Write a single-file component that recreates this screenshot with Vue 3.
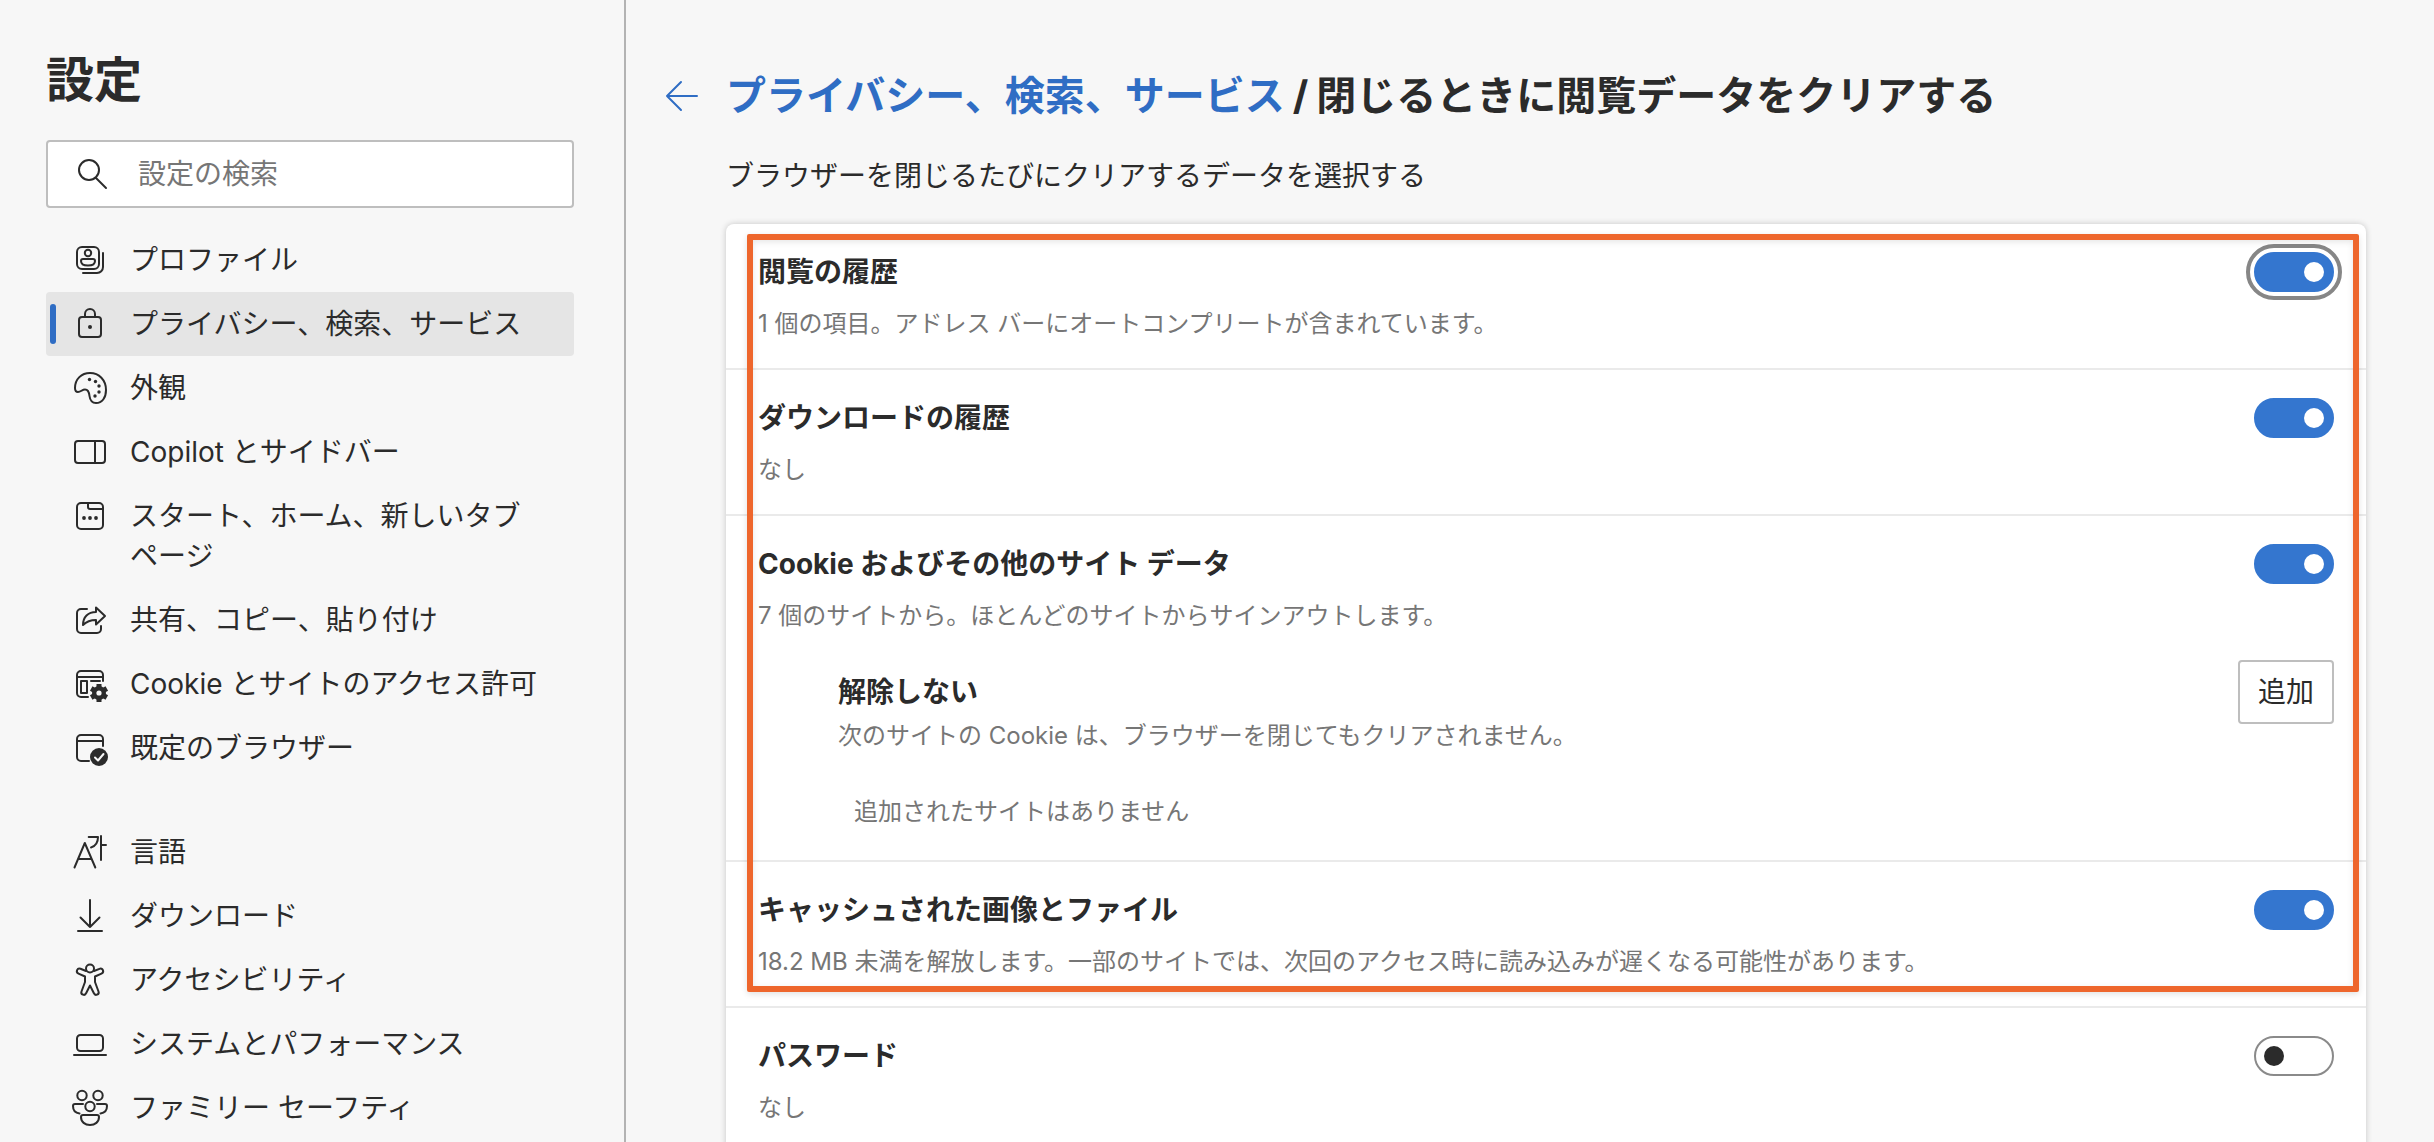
<script setup>
import { ref } from 'vue'

const mainNav = [
  { icon: 'profile', label: 'プロファイル' },
  { icon: 'lock', label: 'プライバシー、検索、サービス', current: true },
  { icon: 'palette', label: '外観' },
  { icon: 'sidebar', label: 'Copilot とサイドバー' },
  { icon: 'tab', label: 'スタート、ホーム、新しいタブ ページ' },
  { icon: 'share', label: '共有、コピー、貼り付け' },
  { icon: 'permissions', label: 'Cookie とサイトのアクセス許可' },
  { icon: 'browser', label: '既定のブラウザー' },
]

const systemNav = [
  { icon: 'language', label: '言語' },
  { icon: 'download', label: 'ダウンロード' },
  { icon: 'accessibility', label: 'アクセシビリティ' },
  { icon: 'laptop', label: 'システムとパフォーマンス' },
  { icon: 'family', label: 'ファミリー セーフティ' },
]

const navGroups = [mainNav, systemNav]

const icons = {
  profile:
    '<rect x="7" y="7" width="22" height="22" rx="5"/><path d="M33 13v14a6 6 0 0 1-6 6H13"/><circle cx="18" cy="13" r="3.2"/><path d="M13 19h10a2 2 0 0 1 2 2c0 3-3 4.5-7 4.5s-7-1.5-7-4.5a2 2 0 0 1 2-2z"/>',
  lock: '<rect x="9" y="13" width="22" height="20" rx="3"/><path d="M15 13v-3a5 5 0 0 1 10 0v3"/><circle class="solid" cx="20" cy="23" r="2"/>',
  palette:
    '<path d="M5 20C5 11 11.5 5 20 5c9 0 16 7 16 17 0 8-4 13-10 13-4 0-6-3-6.5-7-.4-4-1.500-6.500-4.500-6.500s-4 2.500-7 2.500c-2 0-3-1.500-3-4z"/><g class="solid"><circle cx="19.5" cy="11.5" r="1.7"/><circle cx="25.5" cy="13.5" r="1.7"/><circle cx="29" cy="18" r="1.7"/><circle cx="29" cy="24" r="1.7"/><circle cx="25" cy="28" r="1.7"/></g>',
  sidebar: '<rect x="5" y="9" width="30" height="22" rx="3"/><path d="M25 9v22"/>',
  tab: '<rect x="7" y="7" width="26" height="26" rx="4"/><path d="M18 7v4a2 2 0 0 0 2 2h13"/><g class="solid"><circle cx="14" cy="22" r="1.9"/><circle cx="20" cy="22" r="1.9"/><circle cx="26" cy="22" r="1.9"/></g>',
  share:
    '<path d="M17 9h-6a4 4 0 0 0-4 4v16a4 4 0 0 0 4 4h16a4 4 0 0 0 4-4v-3"/><path d="M26 7.5l9 8.5-9 8.5V20c-6 0-10 2-13 5 0-8 5-13 13-13z"/>',
  permissions:
    '<path d="M18 33h-7a4 4 0 0 1-4-4V11a4 4 0 0 1 4-4h18a4 4 0 0 1 4 4v6M7 13h26M21 17h9"/><rect x="11" y="17" width="6" height="12"/><circle class="solid" cx="29" cy="29" r="7"/><path class="teeth" d="M29 20v18M21.2 24.5l15.6 9M21.2 33.5l15.6-9"/><circle class="hole" cx="29" cy="29" r="2.6"/>',
  browser:
    '<path d="M19 33h-8a4 4 0 0 1-4-4V11a4 4 0 0 1 4-4h18a4 4 0 0 1 4 4v7M7 13h26"/><circle class="solid" cx="29" cy="29" r="9"/><path class="tick" d="M25 29.5l3 3 5.500-6.500"/>',
  language: '<path d="M4.5 35.5L14.8 11l10.5 24.5M8.5 27h13M18.7 5H28c0 6-2 9-7 10.5M31 4v24M31 13h5"/>',
  download: '<path d="M20 4v27M10.5 21.5L20 31l9.500-9.500M8 35h24"/>',
  accessibility:
    '<circle cx="20" cy="8.5" r="4"/><path d="M16 11l-5.500-2.200a2.600 2.600 0 0 0-2 4.800l6.500 2.900V22l-3.500 9.500a2.400 2.400 0 0 0 4.600 1.700L20 25.500l3.900 7.700a2.400 2.400 0 0 0 4.600-1.700L25 22v-5.500l6.500-2.900a2.600 2.600 0 0 0-2-4.800L24 11"/>',
  laptop: '<rect x="7" y="11" width="26" height="16" rx="3.5"/><path d="M4 31h32"/>',
  family:
    '<circle cx="12" cy="7.5" r="4.7"/><circle cx="28" cy="7.5" r="4.7"/><circle cx="20" cy="18.5" r="4.7"/><path d="M13 16H5a2 2 0 0 0-2 2c0 4 2.500 7 6.500 7.500M27 16h8a2 2 0 0 1 2 2c0 4-2.500 7-6.500 7.500M13 27h14a2 2 0 0 1 2 2c0 5-4 8-9 8s-9-3-9-8a2 2 0 0 1 2-2z"/>',
}

const query = ref('')

const clearItems = ref([
  { id: 'history', title: '閲覧の履歴', note: '1 個の項目。アドレス バーにオートコンプリートが含まれています。', on: true, focused: true },
  { id: 'downloads', title: 'ダウンロードの履歴', note: 'なし', on: true },
  { id: 'cookies', title: 'Cookie およびその他のサイト データ', note: '7 個のサイトから。ほとんどのサイトからサインアウトします。', on: true, exceptions: true },
  { id: 'cache', title: 'キャッシュされた画像とファイル', note: '18.2 MB 未満を解放します。一部のサイトでは、次回のアクセス時に読み込みが遅くなる可能性があります。', on: true },
])

const password = ref(false)
</script>

<template>
  <div class="settings">
    <aside class="side">
      <h1>設定</h1>
      <label class="search">
        <svg class="icon" viewBox="0 0 40 40" aria-hidden="true">
          <circle cx="17" cy="16" r="10" />
          <path d="M24 24l10 10" />
        </svg>
        <input v-model="query" type="search" placeholder="設定の検索" aria-label="設定の検索" />
      </label>
      <nav>
        <ul v-for="(group, i) in navGroups" :key="i">
          <li v-for="item in group" :key="item.icon">
            <a href="#" :class="{ current: item.current }" :aria-current="item.current ? 'page' : null">
              <svg class="icon" viewBox="0 0 40 40" aria-hidden="true" v-html="icons[item.icon]"></svg>
              <span>{{ item.label }}</span>
            </a>
          </li>
        </ul>
      </nav>
    </aside>

    <main class="page">
      <button class="back" type="button" aria-label="戻る">
        <svg class="icon" viewBox="0 0 40 40" aria-hidden="true"><path d="M35 20H5M19 6L5 20l14 14" /></svg>
      </button>
      <div class="content">
        <h2><a href="#">プライバシー、検索、サービス</a><span class="slash">/</span><span>閉じるときに閲覧データをクリアする</span></h2>
        <p class="intro">ブラウザーを閉じるたびにクリアするデータを選択する</p>

        <section class="card">
          <div class="marked">
            <div v-for="item in clearItems" :key="item.id" class="row">
              <div class="line">
                <label class="text" :for="item.id">
                  <span class="title">{{ item.title }}</span>
                  <span class="note">{{ item.note }}</span>
                </label>
                <input :id="item.id" v-model="item.on" class="toggle" :class="{ focused: item.focused }" type="checkbox" role="switch" />
              </div>
              <div v-if="item.exceptions" class="exceptions">
                <div class="line">
                  <div class="exception-text">
                    <h3 class="title">解除しない</h3>
                    <p class="note">次のサイトの Cookie は、ブラウザーを閉じてもクリアされません。</p>
                  </div>
                  <button class="add" type="button">追加</button>
                </div>
                <p class="note empty">追加されたサイトはありません</p>
              </div>
            </div>
            <div class="marker"></div>
          </div>
          <div class="row">
            <div class="line">
              <label class="text" for="password">
                <span class="title">パスワード</span>
                <span class="note">なし</span>
              </label>
              <input id="password" v-model="password" class="toggle" type="checkbox" role="switch" />
            </div>
          </div>
        </section>
      </div>
    </main>
  </div>
</template>

<style>
body {
  background: #f7f7f7;
}
</style>

<style scoped>
* {
  box-sizing: border-box;
  margin: 0;
  padding: 0;
}

.settings {
  display: flex;
  height: 100vh;
  color: #2b2b2b;
  background: #f7f7f7;
  font: 28px/40px Inter, "Noto Sans CJK JP", sans-serif;
}

.side,
.page {
  overflow-y: auto;
  scrollbar-width: none;
}

.side {
  flex: 0 0 626px;
  padding: 48px 50px 0 46px;
  border-right: 2px solid #b3b3b3;
}

h1 {
  font-size: 48px;
  line-height: 64px;
}

.icon {
  flex: none;
  display: block;
  width: 40px;
  height: 40px;
  fill: none;
  stroke: currentColor;
  stroke-width: 2;
  stroke-linecap: round;
  stroke-linejoin: round;
}

.icon :deep(.solid) {
  fill: currentColor;
  stroke: none;
}

.icon :deep(.teeth) {
  stroke-width: 5;
  stroke-linecap: butt;
}

.icon :deep(.hole) {
  fill: #f7f7f7;
  stroke: none;
}

.icon :deep(.tick) {
  stroke: #f7f7f7;
}

.search {
  display: flex;
  align-items: center;
  gap: 26px;
  height: 68px;
  margin-top: 28px;
  padding: 0 24px;
  background: #fff;
  border: 2px solid #bebebe;
  border-radius: 4px;
}

.search input {
  flex: 1;
  min-width: 0;
  color: inherit;
  background: none;
  border: 0;
  outline: 0;
  font: inherit;
}

.search input::placeholder {
  color: #767676;
}

nav {
  display: flex;
  flex-direction: column;
  gap: 40px;
  margin-top: 20px;
}

ul {
  list-style: none;
}

nav a {
  position: relative;
  display: flex;
  align-items: flex-start;
  gap: 20px;
  padding: 12px 28px 12px 24px;
  color: inherit;
  text-decoration: none;
  border-radius: 4px;
}

nav a.current {
  background: #e5e5e5;
}

nav a.current::before {
  content: "";
  position: absolute;
  top: 12px;
  bottom: 12px;
  left: 4px;
  width: 6px;
  background: #2f6dc4;
  border-radius: 3px;
}

.page {
  flex: 1;
  display: grid;
  grid-template-columns: 40px minmax(0, 1fr);
  align-items: start;
  column-gap: 24px;
  padding: 68px 68px 0 36px;
}

.back {
  height: 56px;
  color: #2f6dc4;
  background: none;
  border: 0;
}

h2 {
  display: flex;
  gap: 8px;
  font-size: 40px;
  line-height: 56px;
}

h2 a {
  color: #2f6dc4;
  text-decoration: none;
}

.intro {
  margin-top: 32px;
}

.card {
  margin-top: 28px;
  background: #fff;
  border-radius: 8px;
  box-shadow: 0 0 6px rgba(0, 0, 0, 0.2);
}

.marked {
  position: relative;
}

.row {
  padding: 28px 32px;
}

.marked .row {
  border-bottom: 2px solid #eaeaea;
}

.line {
  display: flex;
  align-items: flex-start;
  justify-content: space-between;
}

.text {
  display: flex;
  flex-direction: column;
  gap: 16px;
}

.title {
  font-size: 28px;
  font-weight: 700;
  line-height: 40px;
}

.note {
  color: #767676;
  font-size: 24px;
  line-height: 32px;
}

.toggle {
  appearance: none;
  flex: none;
  display: flex;
  align-items: center;
  width: 80px;
  height: 40px;
  padding: 0 8px;
  background: #fff;
  border: 2px solid #8a8a8a;
  border-radius: 20px;
}

.toggle::before {
  content: "";
  width: 20px;
  height: 20px;
  background: #2b2b2b;
  border-radius: 50%;
}

.toggle:checked {
  justify-content: flex-end;
  background: #3476cf;
  border-color: #3476cf;
}

.toggle:checked::before {
  background: #fff;
}

.toggle.focused {
  outline: 4px solid #868686;
  outline-offset: 4px;
}

.exceptions {
  margin-top: 28px;
  padding: 0 0 4px 80px;
}

.exception-text {
  display: flex;
  flex-direction: column;
  gap: 8px;
  padding-top: 12px;
}

.add {
  flex: none;
  width: 96px;
  height: 64px;
  color: inherit;
  background: #fff;
  border: 2px solid #bebebe;
  border-radius: 4px;
  font: inherit;
}

.empty {
  margin: 44px 0 0 16px;
}

.marker {
  position: absolute;
  inset: 10px 7px 16px 21px;
  border: 6px solid #ee662c;
  border-radius: 2px;
  box-shadow: 0 2px 6px rgba(0, 0, 0, 0.12), inset 0 2px 6px rgba(0, 0, 0, 0.1);
  pointer-events: none;
}
</style>
